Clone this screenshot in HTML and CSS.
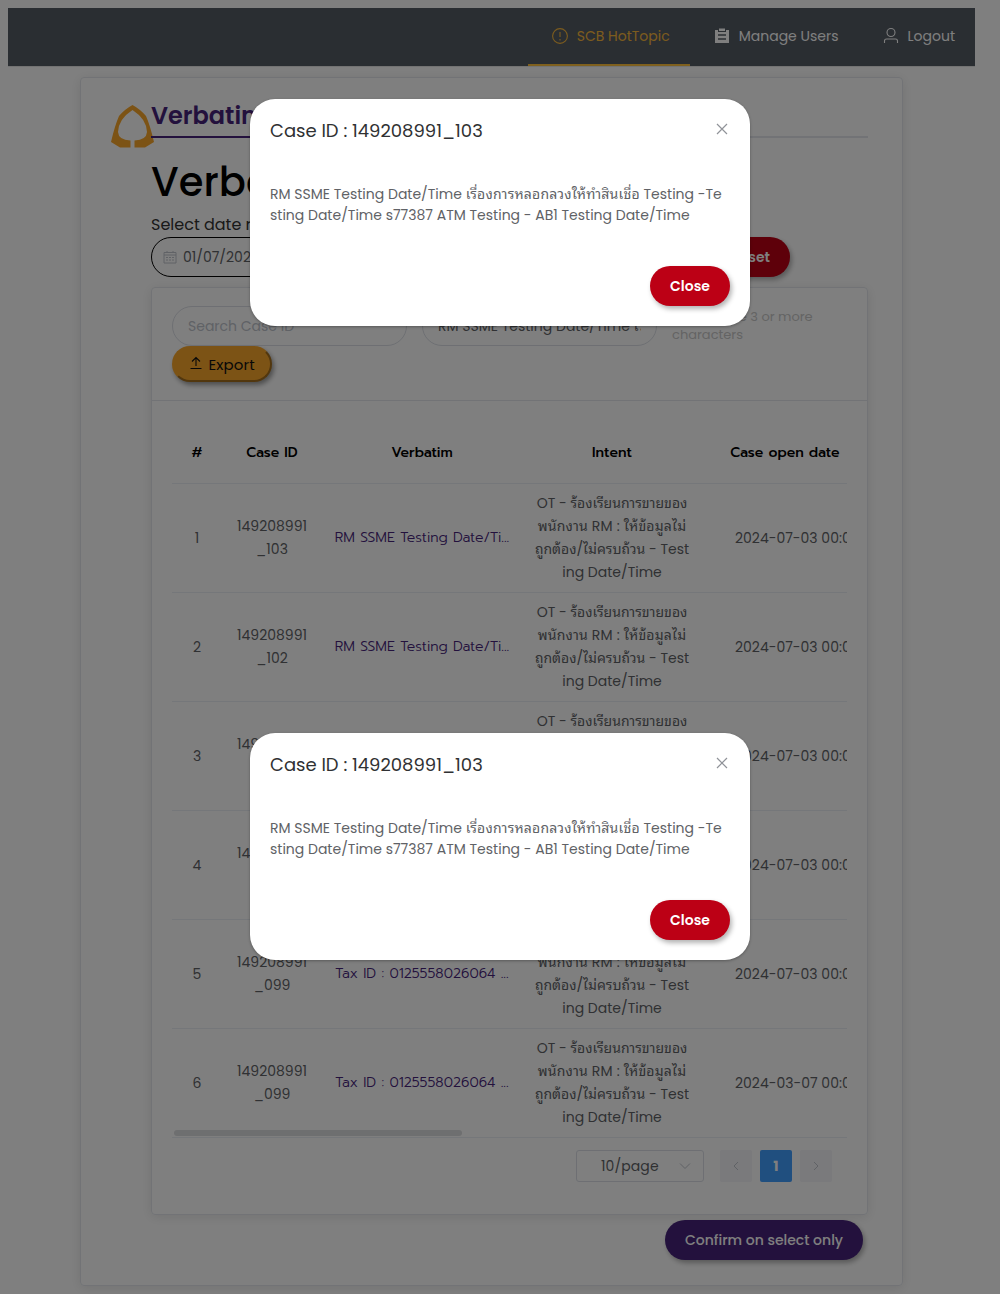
FILE: index.html
```html
<!DOCTYPE html>
<html lang="en">
<head>
<meta charset="utf-8">
<title>SCB HotTopic</title>
<link rel="stylesheet" href="styles.css">
</head>
<body>
<nav class="nav">
  <a class="nav-item active"><svg class="icon" viewBox="0 0 18 18"><circle cx="9" cy="9" r="7.4"/><path d="M9 5v5M9 12v1.4"/></svg><span>SCB HotTopic</span></a>
  <a class="nav-item"><svg class="icon" viewBox="0 0 18 18"><path class="solid" d="M2 3h3v2h8V3h3v13H2zM6 1.500h6V4H6z"/><path class="dark" d="M5 8h8M5 12h8"/></svg><span>Manage Users</span></a>
  <a class="nav-item"><svg class="icon" viewBox="0 0 18 18"><circle cx="9" cy="5.500" r="4"/><path d="M2.500 16v-2q0-2 2-2h9q2 0 2 2v2"/></svg><span>Logout</span></a>
</nav>

<main class="page-card">
  <svg class="logo" viewBox="0 0 43 44"><path d="M21.500 0Q29 4 35 11Q39 20 43 37L34 42.500H23.500V35.500Q35.500 35 36 27Q35.500 14 21.500 5Q7.500 14 7 27Q7.500 35 19.500 35.500V42.500H9L0 37Q4 20 8 11Q14 4 21.500 0Z"/></svg>
  <div class="content">
    <div class="tabs"><span class="tab">Verbatim</span></div>
    <h1>Verbatim</h1>
    <div class="label">Select date range</div>
    <div class="filters">
      <div class="date-range"><svg class="cal" viewBox="0 0 14 14"><path d="M1 2.500h12v10.500H1zM1 5h12M4 1v2M10 1v2"/><path stroke-dasharray="2 1" d="M3 7.500h8M3 10h8"/></svg><span>01/07/2024</span></div>
      <button class="btn red reset">Reset</button>
    </div>
    <section class="panel">
      <header class="panel-head">
        <div class="search-row">
          <div class="input placeholder">Search Case ID</div>
          <div class="input"><span class="clip">RM SSME Testing Date/Time เรื่องการ</span></div>
          <p class="hint">Please type 3 or more characters</p>
        </div>
        <button class="export"><svg viewBox="0 0 14 14"><path d="M1.500 12.500h11M7 10V2M3 5.500l4-4 4 4"/></svg><span>Export</span></button>
      </header>
      <div class="table-wrap">
        <div class="row head"><div>#</div><div>Case ID</div><div>Verbatim</div><div>Intent</div><div class="open">Case open date</div></div>
        <div class="row"><div>1</div><div>149208991<br>_103</div><div class="link">RM SSME Testing Date/Ti...</div><div class="intent">OT - ร้องเรียนการขายของ<br><span class="thai">พนักงาน RM : ให้ข้อมูลไม่</span><br>ถูกต้อง/ไม่ครบถ้วน - Test<br>ing Date/Time</div><div class="date">2024-07-03 00:00:00</div></div>
        <div class="row"><div>2</div><div>149208991<br>_102</div><div class="link">RM SSME Testing Date/Ti...</div><div class="intent">OT - ร้องเรียนการขายของ<br><span class="thai">พนักงาน RM : ให้ข้อมูลไม่</span><br>ถูกต้อง/ไม่ครบถ้วน - Test<br>ing Date/Time</div><div class="date">2024-07-03 00:00:00</div></div>
        <div class="row"><div>3</div><div>149208991<br>_101</div><div class="link">RM SSME Testing Date/Ti...</div><div class="intent">OT - ร้องเรียนการขายของ<br><span class="thai">พนักงาน RM : ให้ข้อมูลไม่</span><br>ถูกต้อง/ไม่ครบถ้วน - Test<br>ing Date/Time</div><div class="date">2024-07-03 00:00:00</div></div>
        <div class="row"><div>4</div><div>149208991<br>_100</div><div class="link">RM SSME Testing Date/Ti...</div><div class="intent">OT - ร้องเรียนการขายของ<br><span class="thai">พนักงาน RM : ให้ข้อมูลไม่</span><br>ถูกต้อง/ไม่ครบถ้วน - Test<br>ing Date/Time</div><div class="date">2024-07-03 00:00:00</div></div>
        <div class="row"><div>5</div><div>149208991<br>_099</div><div class="link">Tax ID : 0125558026064 ...</div><div class="intent">OT - ร้องเรียนการขายของ<br><span class="thai">พนักงาน RM : ให้ข้อมูลไม่</span><br>ถูกต้อง/ไม่ครบถ้วน - Test<br>ing Date/Time</div><div class="date">2024-07-03 00:00:00</div></div>
        <div class="row"><div>6</div><div>149208991<br>_099</div><div class="link">Tax ID : 0125558026064 ...</div><div class="intent">OT - ร้องเรียนการขายของ<br><span class="thai">พนักงาน RM : ให้ข้อมูลไม่</span><br>ถูกต้อง/ไม่ครบถ้วน - Test<br>ing Date/Time</div><div class="date">2024-03-07 00:00:00</div></div>
        <div class="thumb"></div>
      </div>
      <div class="pager">
        <div class="page-size"><span>10/page</span><svg viewBox="0 0 12 12"><path d="M1 3.500l5 5 5-5"/></svg></div>
        <div class="page-btn"><svg viewBox="0 0 12 12"><path d="M8 2L4 6l4 4"/></svg></div>
        <div class="page-btn current">1</div>
        <div class="page-btn"><svg viewBox="0 0 12 12"><path d="M4 2l4 4-4 4"/></svg></div>
      </div>
    </section>
    <div class="actions"><button class="btn purple">Confirm on select only</button></div>
  </div>
</main>

<div class="overlay">
  <div class="dialog first">
    <div class="dialog-head"><span>Case ID : 149208991_103</span><svg viewBox="0 0 12 12"><path d="M1 1l10 10M11 1L1 11"/></svg></div>
    <p>RM SSME Testing Date/Time <span class="thai">เรื่องการหลอกลวงให้ทำสินเชื่อ</span> Testing -Te<br>sting Date/Time s77387 ATM Testing - AB1 Testing Date/Time</p>
    <div class="dialog-foot"><button class="btn red close">Close</button></div>
  </div>
  <div class="dialog second">
    <div class="dialog-head"><span>Case ID : 149208991_103</span><svg viewBox="0 0 12 12"><path d="M1 1l10 10M11 1L1 11"/></svg></div>
    <p>RM SSME Testing Date/Time <span class="thai">เรื่องการหลอกลวงให้ทำสินเชื่อ</span> Testing -Te<br>sting Date/Time s77387 ATM Testing - AB1 Testing Date/Time</p>
    <div class="dialog-foot"><button class="btn red close">Close</button></div>
  </div>
</div>
</body>
</html>
```
FILE: styles.css
```css
* { box-sizing: border-box; }
html { height: 1294px; overflow: hidden; }
body {
  margin: 0;
  padding: 8px 25px 0 8px;
  height: 1294px;
  overflow: hidden;
  background: #fff;
  color: #606266;
  font: 14px/21px Poppins, "Leelawadee UI", "Noto Sans Thai Looped", Loma, Garuda, Sarabun, "DejaVu Sans", sans-serif;
}
button { font: inherit; margin: 0; }
svg { fill: none; stroke: currentColor; flex: none; }

.nav { display: flex; justify-content: flex-end; height: 58px; background: #545c64; box-shadow: 0 1px 0 #e6e6e6; }
.nav-item { display: flex; align-items: center; padding: 0 20px 0 23px; gap: 8px; height: 58px; color: #fff; border-bottom: 2px solid transparent; white-space: nowrap; }
.nav-item.active { color: #f9b83c; border-color: #ffc13c; }
.icon { width: 18px; height: 18px; stroke-width: 1.1; }
.icon .solid { fill: currentColor; stroke: none; }
.icon .dark { stroke: #545c64; stroke-width: 1.5; }

.page-card { display: flex; align-items: flex-start; width: 823px; height: 1209px; margin: 11px 0 0 72px; padding: 20px 34px 0 30px; border: 1px solid #e4e7ed; border-radius: 4px; box-shadow: 0 2px 12px rgba(0,0,0,.1); }
.logo { width: 43px; height: 44px; margin: 7px -3px 0 0; fill: #f9a72b; stroke: none; }
.content { width: 717px; flex: none; }
.tabs { height: 40px; border-bottom: 2px solid #e4e7ed; display: flex; }
.tab { height: 40px; padding-right: 20px; border-bottom: 2px solid #46237a; color: #46237a; font-size: 24px; line-height: 36px; font-weight: 600; }
h1 { margin: 14px 0 0; height: 61px; color: #000; font-size: 40px; line-height: 61px; font-weight: 500; }
.label { height: 24px; line-height: 24px; color: #333; font-size: 16px; }
.filters { display: flex; justify-content: space-between; width: 639px; height: 40px; }
.date-range { display: flex; align-items: center; gap: 6px; width: 350px; padding-left: 11px; border: 1px solid #000; border-radius: 20px; }
.cal { width: 14px; height: 14px; color: #c0c4cc; }
.btn { height: 40px; padding: 0 20px; border: 0; border-radius: 20px; color: #fff; font-weight: 600; box-shadow: 2px 3px 5px rgba(0,0,0,.3); white-space: nowrap; }
.red { background: #bc0015; }
.purple { width: 198px; background: #46237a; font-weight: 500; }
.close { width: 80px; }

.panel { width: 717px; height: 928px; margin-top: 10px; border: 1px solid #e4e7ed; border-radius: 4px; box-shadow: 0 2px 12px rgba(0,0,0,.1); }
.panel-head { height: 113px; padding: 18px 20px; border-bottom: 1px solid #e4e7ed; }
.search-row { display: flex; gap: 15px; height: 40px; }
.input { width: 235px; height: 40px; padding: 0 15px; border: 1px solid #dcdfe6; border-radius: 20px; line-height: 38px; }
.placeholder { color: #c0c4cc; }
.clip { display: block; overflow: hidden; white-space: nowrap; }
.hint { width: 160px; margin: 2px 0 0; color: #c8c8c8; font-size: 13px; line-height: 18px; }
.export { display: flex; align-items: center; gap: 5.5px; width: 100px; height: 36px; padding: 0 0 0 15px; border: 2px outset #f9a72b; border-radius: 18px; background: #f9a72b; color: #111; font-size: 15px; box-shadow: 2px 3px 5px rgba(0,0,0,.4); }
.export svg { width: 14px; height: 14px; margin-top: -3px; stroke-width: 1.1; }
.export span { letter-spacing: .1px; }

.table-wrap { position: relative; margin: 20px 20px 0; overflow: hidden; }
.row { display: grid; grid-template-columns: 50px 100px 200px 180px 213px; width: 743px; height: 109px; align-items: center; text-align: center; line-height: 23px; border-bottom: 1px solid #ebeef5; }
.head { height: 63px; color: #000; font-family: Prompt, Poppins, sans-serif; font-weight: 500; }
.open { padding-right: 47px; }
.link { padding-bottom: 2px; color: #46237a; font-family: Prompt, Poppins, sans-serif; font-weight: 300; white-space: nowrap; }
.intent { white-space: nowrap; }
.thai { letter-spacing: .19px; }
.date { white-space: nowrap; text-align: left; padding-left: 33px; }
.thumb { position: absolute; left: 2px; bottom: 2px; width: 288px; height: 6px; border-radius: 3px; background: #dddee0; }
.pager { display: flex; padding: 12px 35px 0; justify-content: flex-end; gap: 8px; }
.page-size { display: flex; align-items: center; justify-content: space-between; width: 128px; height: 32px; margin-right: 8px; padding: 0 12px 0 24px; border: 1px solid #dcdfe6; border-radius: 3px; }
.page-size span { letter-spacing: .1px; }
.page-size svg, .page-btn svg { width: 12px; height: 12px; color: #c0c4cc; }
.page-btn { display: flex; align-items: center; justify-content: center; width: 32px; height: 32px; border-radius: 2px; background: #f4f4f8; }
.page-btn.current { background: #409eff; color: #fff; font-weight: 700; }
.actions { display: flex; justify-content: flex-end; padding: 5px 5px 0; }

.overlay { position: absolute; inset: 0; height: 1294px; background: rgba(0,0,0,.5); }
.dialog { position: absolute; left: 250px; width: 500px; height: 227px; padding: 20px; border-radius: 25px; background: #fff; box-shadow: 0 1px 3px rgba(0,0,0,.3); }
.first { top: 99px; }
.second { top: 733px; }
.dialog-head { display: flex; justify-content: space-between; height: 24px; color: #303133; font-size: 18px; line-height: 24px; }
.dialog-head svg { width: 12px; height: 12px; margin: 4px 2px 0 0; color: #909399; stroke-width: 1.2; }
.dialog p { height: 42px; margin: 41px 0 0; white-space: nowrap; }
.dialog-foot { display: flex; justify-content: flex-end; margin-top: 40px; }
```
